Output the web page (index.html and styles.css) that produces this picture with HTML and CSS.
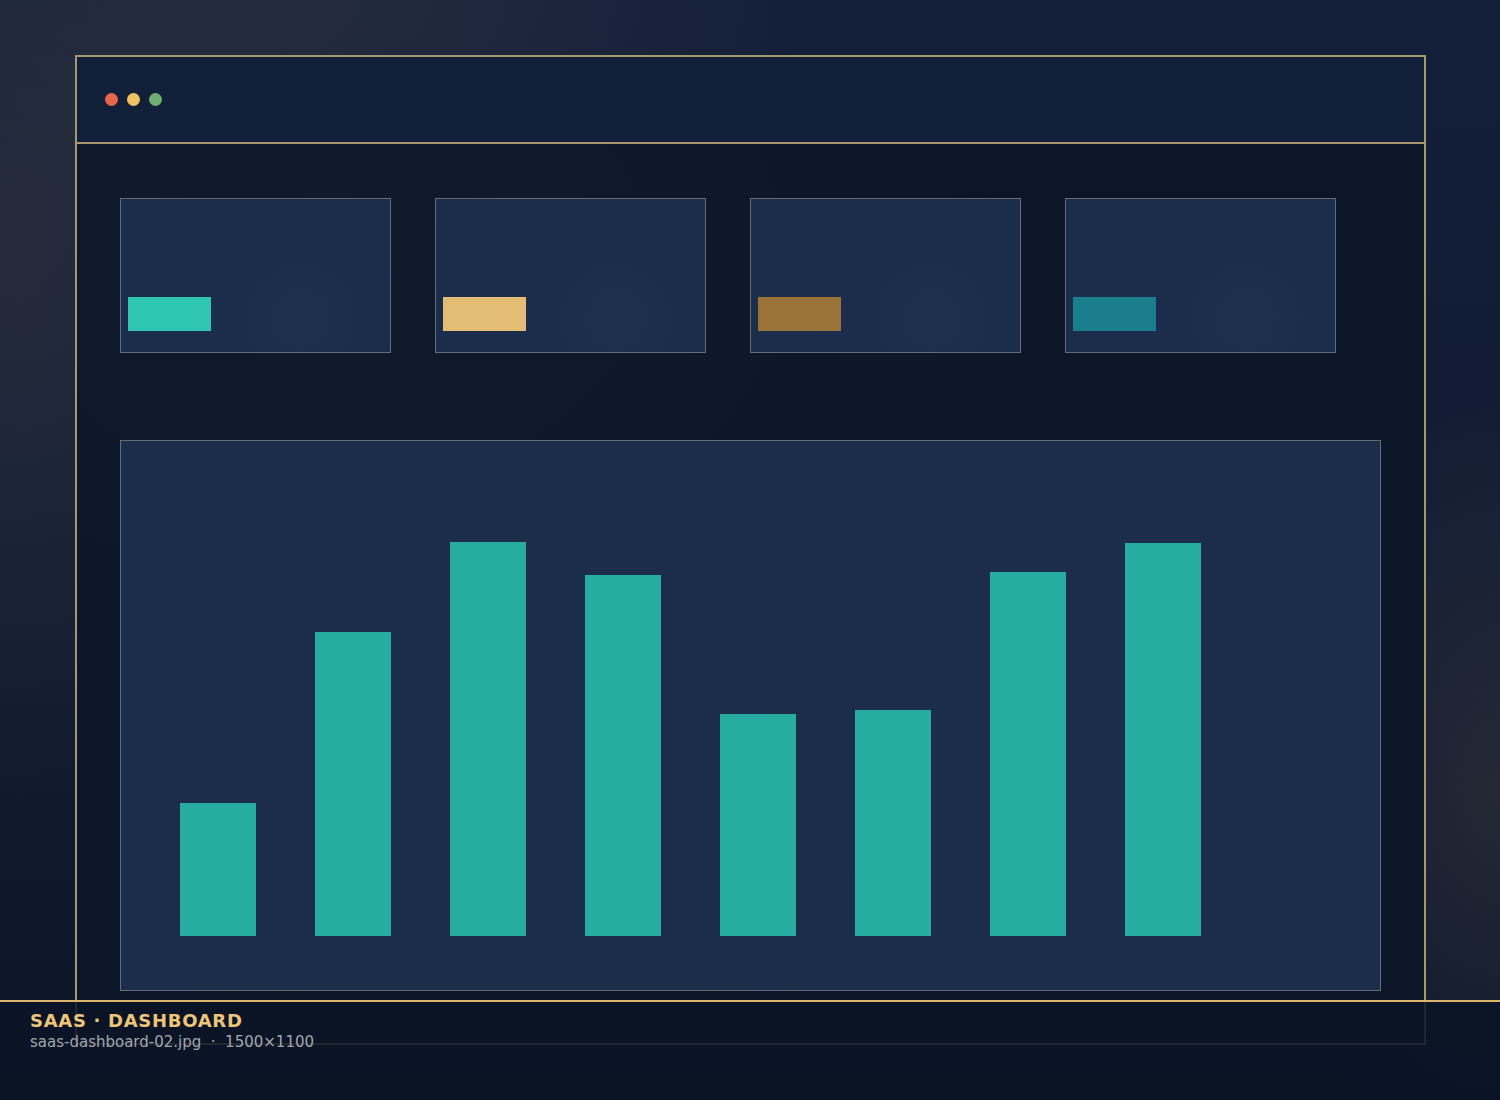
FILE: index.html
```html
<!DOCTYPE html>
<html lang="en">
<head>
<meta charset="utf-8">
<title>SaaS Dashboard</title>
<link rel="stylesheet" href="styles.css">
</head>
<body>
  <div class="window">
    <div class="titlebar">
      <span class="dot dot-red"></span>
      <span class="dot dot-yellow"></span>
      <span class="dot dot-green"></span>
    </div>
    <div class="content">
      <div class="stats">
        <div class="stat"><span class="stat-bar accent-teal"></span></div>
        <div class="stat"><span class="stat-bar accent-gold"></span></div>
        <div class="stat"><span class="stat-bar accent-bronze"></span></div>
        <div class="stat"><span class="stat-bar accent-cyan"></span></div>
      </div>
      <div class="chart">
        <div class="bar" style="height:133px"></div>
        <div class="bar" style="height:304px"></div>
        <div class="bar" style="height:394px"></div>
        <div class="bar" style="height:361px"></div>
        <div class="bar" style="height:222px"></div>
        <div class="bar" style="height:226px"></div>
        <div class="bar" style="height:364px"></div>
        <div class="bar" style="height:393px"></div>
      </div>
    </div>
  </div>
  <footer class="caption">
    <div class="caption-title">SAAS · DASHBOARD</div>
    <div class="caption-meta">saas-dashboard-02.jpg &nbsp;·&nbsp; 1500×1100</div>
  </footer>
</body>
</html>
```
FILE: styles.css
```css
* {
  box-sizing: border-box;
}

html, body {
  margin: 0;
  padding: 0;
}

body {
  width: 1500px;
  height: 1100px;
  overflow: hidden;
  position: relative;
  font-family: "DejaVu Sans", sans-serif;
  background:
    radial-gradient(ellipse 380px 560px at 20px 260px, rgba(56, 56, 66, 0.5), rgba(56, 56, 66, 0) 100%),
    radial-gradient(ellipse 480px 340px at 330px 0px, rgba(60, 60, 72, 0.4), rgba(60, 60, 72, 0) 100%),
    radial-gradient(ellipse 240px 400px at 1500px 790px, rgba(58, 56, 60, 0.5), rgba(58, 56, 60, 0) 100%),
    linear-gradient(180deg, #131f39 0%, #111c33 50%, #0c1629 100%);
}

/* app window */
.window {
  margin: 55px 0 0 75px;
  width: 1351px;
  height: 990px;
  border: 2px solid #a8966e;
  background:
    radial-gradient(ellipse 700px 500px at 250px 200px, rgba(20, 31, 52, 0.5), rgba(20, 31, 52, 0) 100%),
    #0b1628;
  display: flex;
  flex-direction: column;
}

.titlebar {
  height: 87px;
  flex: none;
  border-bottom: 2px solid #a8966e;
  background: #121f39;
  display: flex;
  align-items: center;
  gap: 9px;
  padding-left: 28px;
}

.dot {
  width: 13px;
  height: 13px;
  border-radius: 50%;
}

.dot-red { background: #e8664b; }
.dot-yellow { background: #f0c262; }
.dot-green { background: #70ad70; }

.content {
  padding: 54px 0 0 43px;
}

/* stat cards */
.stats {
  display: flex;
  gap: 44px;
}

.stat {
  width: 271px;
  height: 155px;
  border: 1px solid #676c74;
  background:
    radial-gradient(circle 70px at 180px 120px, rgba(34, 50, 80, 0.5), rgba(34, 50, 80, 0) 100%),
    #1b2d4a;
  display: flex;
  align-items: flex-end;
  padding: 0 0 21px 7px;
}

.stat-bar {
  width: 83px;
  height: 34px;
}

.accent-teal { background: #2fc6b1; }
.accent-gold { background: #e3bd74; }
.accent-bronze { background: #9a7339; }
.accent-cyan { background: #1b7e8d; }

/* bar chart */
.chart {
  margin-top: 87px;
  width: 1261px;
  height: 551px;
  border: 1px solid #676c74;
  background:
    radial-gradient(ellipse 500px 300px at 350px 320px, rgba(30, 46, 76, 0.35), rgba(30, 46, 76, 0) 100%),
    #1b2d4a;
  display: flex;
  align-items: flex-end;
  gap: 59px;
  padding: 0 0 54px 59px;
}

.bar {
  width: 76px;
  background: #26ad9f;
}

/* caption strip */
.caption {
  position: absolute;
  left: 0;
  right: 0;
  bottom: 0;
  height: 100px;
  border-top: 2px solid #d8b46c;
  background: rgba(10, 20, 37, 0.86);
  padding: 8px 30px 0;
}

.caption-title {
  color: #ecc47a;
  font-weight: bold;
  font-size: 18px;
  letter-spacing: 0.7px;
  line-height: 22px;
}

.caption-meta {
  color: #a2a6ad;
  font-size: 15px;
  line-height: 18px;
  margin-top: 1px;
}
```
